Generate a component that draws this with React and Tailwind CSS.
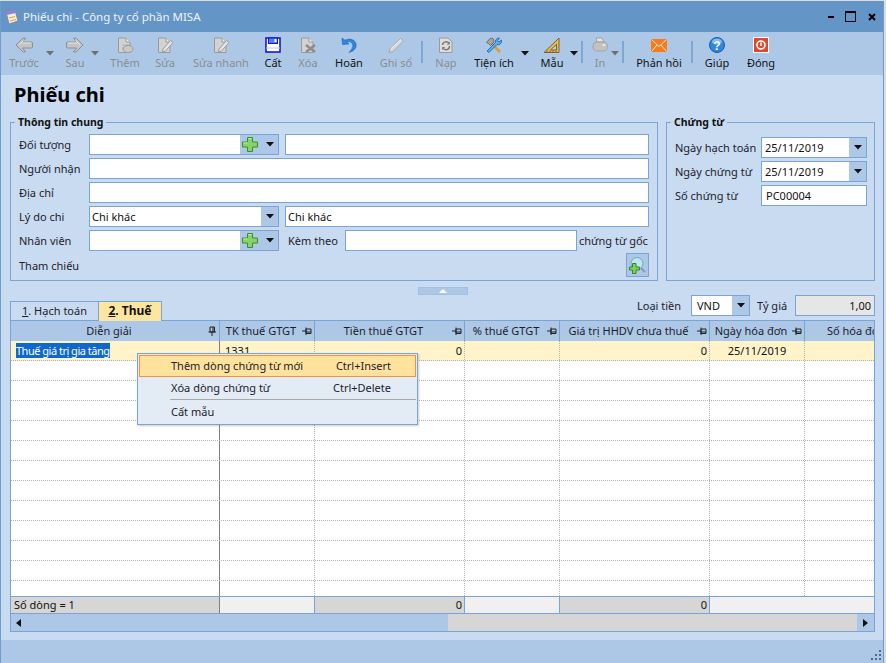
const Caret = ({ color = "#111", className = "" }) => (
  <svg width="8" height="5" viewBox="0 0 8 5" className={className}>
    <path d="M0 0H8L4 4.5Z" fill={color} />
  </svg>
);

const ArrowIcon = ({ flip }) => (
  <svg width="18" height="16" viewBox="0 0 18 16" className={flip ? "-scale-x-100" : ""}>
    <path d="M1 8L8 1H10.5L7.5 5H16.5Q17.5 5 17.5 6V10Q17.5 11 16.5 11H7.5L10.5 15H8Z" fill="#c4c4c4" stroke="#8f8f8f" />
    <path d="M4 8L8.5 3.5M7.5 6H16" stroke="#e6e6e6" fill="none" />
  </svg>
);

const Doc = ({ children }) => (
  <svg width="18" height="17" viewBox="0 0 18 17">
    <path d="M2.5 1H10L14 5V15.5H2.5Z" fill="#d2d2d2" stroke="#9a9a9a" />
    <path d="M10 1V5H14" fill="#eeeeee" stroke="#9a9a9a" />
    {children}
  </svg>
);

const AddDocIcon = () => (
  <Doc>
    <path d="M6 8H13M6 11H10" stroke="#b5b5b5" />
    <ellipse cx="12" cy="12" rx="5" ry="3.6" fill="#c8c8c8" stroke="#9a9a9a" />
  </Doc>
);

const EditDocIcon = () => (
  <Doc>
    <path d="M7 12L14.5 3.5L17 5.5L9.5 14L6.5 15Z" fill="#e4e4e4" stroke="#9c9c9c" />
  </Doc>
);

const DeleteDocIcon = () => (
  <Doc>
    <path d="M7 8L16 15M16 8L7 15" stroke="#8c8c8c" strokeWidth="2.4" />
  </Doc>
);

const RefreshDocIcon = () => (
  <svg width="18" height="17" viewBox="0 0 18 17">
    <path d="M2.5 1H11L15 5V15.5H2.5Z" fill="#dddddd" stroke="#9a9a9a" />
    <path d="M5.5 8A3.5 3.5 0 0 1 12 6.5M12.5 9A3.5 3.5 0 0 1 6 11" fill="none" stroke="#777" strokeWidth="1.4" />
    <path d="M12.8 4.5V7.5H9.8Z M5.2 13V10H8.2Z" fill="#777" />
  </svg>
);

const SaveIcon = () => (
  <svg width="16" height="16" viewBox="0 0 16 16">
    <rect x="1" y="1" width="14" height="14" fill="#ffffff" stroke="#1616d8" strokeWidth="1.6" />
    <rect x="3.5" y="1" width="9" height="5.5" fill="#4f7fe8" stroke="#1616d8" />
    <rect x="9.5" y="2" width="2" height="3" fill="#ffffff" />
    <path d="M1 11H15" stroke="#b8c8f0" />
  </svg>
);

const UndoIcon = () => (
  <svg width="16" height="17" viewBox="0 0 16 17">
    <path d="M1 1L1.5 7.5L8 7L5.8 5Q9 3.8 11 6Q12.8 8.5 11 11.5Q9.8 13.5 8 15.5Q13 14.5 14.8 10.5Q16.2 6.5 13 3.5Q9.2 0.6 4 3.2Z" fill="#2f86dc" stroke="#1f63b4" strokeWidth="0.6" />
  </svg>
);

const PencilIcon = () => (
  <svg width="18" height="17" viewBox="0 0 18 17">
    <path d="M2 15.5L3 11.5L13.5 1.5L16.5 4L6 14.5Z" fill="#d8d8d8" stroke="#a8a8a8" />
    <path d="M4 11.5L14 2.5" stroke="#f0f0f0" />
  </svg>
);

const ToolsIcon = () => (
  <svg width="18" height="17" viewBox="0 0 18 17">
    <path d="M4 4L15 15" stroke="#d6a035" strokeWidth="2.6" />
    <path d="M1.5 5.5L5 1.5Q7.5 0.5 8.5 2L9 5L5.5 8.5L3.5 6.5Z" fill="#a4a4a4" stroke="#6e6e6e" />
    <path d="M2 14L10.5 5.5Q10 2.5 12.5 1.2L14.5 1L12.5 3.5L14 5L16.5 3Q17 6 15 7.2Q13.5 8 12 7.5L4 15.5Z" fill="#55aef0" stroke="#2a6fb8" />
  </svg>
);

const SquareIcon = () => (
  <svg width="18" height="17" viewBox="0 0 18 17">
    <path d="M1 15.5L16 1V15.5Z" fill="#e8bb52" stroke="#80632a" />
    <path d="M7.5 13L13.5 7.2V13Z" fill="#b8cce8" stroke="#80632a" />
    <path d="M4 15V13.5M7 15V13.5M10 15V13.5M13 15V13.5" stroke="#80632a" />
  </svg>
);

const PrinterIcon = () => (
  <svg width="18" height="17" viewBox="0 0 18 17">
    <path d="M5 1H11L13 5H6Z" fill="#e4e4e4" stroke="#a0a0a0" />
    <path d="M2 9Q2 5 6 5H12Q16.5 5 16.5 9.5Q16.5 14 12 14H6Q2 14 2 9Z" fill="#c2c2c2" stroke="#a4a4a4" />
    <ellipse cx="13" cy="8" rx="1.6" ry="1" fill="#eeeeee" />
  </svg>
);

const MailIcon = () => (
  <svg width="16" height="13" viewBox="0 0 16 13">
    <rect width="16" height="13" fill="#f47b20" />
    <path d="M0.5 0.5L8 7.5L15.5 0.5M0.5 12.5L6 6M15.5 12.5L10 6" fill="none" stroke="#ffe2c4" />
  </svg>
);

const HelpIcon = () => (
  <svg width="16" height="16" viewBox="0 0 16 16">
    <circle cx="8" cy="8" r="7.5" fill="#2f87de" stroke="#1a5aa8" />
    <ellipse cx="8" cy="4.5" rx="5" ry="3" fill="#7cbcf2" />
    <text x="8" y="12.5" textAnchor="middle" fontSize="12" fontWeight="700" fill="#fff" fontFamily="Liberation Sans, sans-serif">?</text>
  </svg>
);

const PowerIcon = () => (
  <svg width="16" height="16" viewBox="0 0 16 16">
    <rect x="0.5" y="0.5" width="15" height="15" fill="#e0482c" stroke="#ffffff" />
    <circle cx="8" cy="8" r="4" fill="none" stroke="#fff" strokeWidth="1.6" />
    <path d="M8 5.5V9" stroke="#fff" strokeWidth="1.6" />
  </svg>
);

const PlusIcon = () => (
  <svg width="16" height="15" viewBox="0 0 16 15">
    <path d="M5.5 0.5H10.5V5H15.5V10H10.5V14.5H5.5V10H0.5V5H5.5Z" fill="#85d468" stroke="#3b8f2a" />
    <path d="M6.5 1.5H9.5M1.5 6H5.5" stroke="#c4f0b0" />
  </svg>
);

const SearchAddIcon = () => (
  <svg width="17" height="17" viewBox="0 0 17 17">
    <circle cx="8" cy="6.5" r="6" fill="#bfe4f2" stroke="#6aa4c4" />
    <path d="M12 11L16 15" stroke="#9a8cd0" strokeWidth="2.2" />
    <path d="M3.5 6.5H7V10H10.5V13H7V16.5H3.5V13H0.5V10H3.5Z" fill="#7fd060" stroke="#2f8a24" />
  </svg>
);

const PinIcon = ({ vertical }) => (
  <svg width="10" height="10" viewBox="0 0 10 10" className={vertical ? "" : "rotate-90"}>
    <path d="M3 1H7.5V6H3ZM1.5 6H9M5 6V10M6 1V6" fill="none" stroke="#222" />
  </svg>
);

const Tool = ({ label, children, disabled, className }) => (
  <div className={`flex shrink-0 flex-col items-center ${className}`}>
    <div className="mt-[3px] flex h-[20px] items-center justify-center">{children}</div>
    <span className={`h-[16px] whitespace-nowrap text-[11px] leading-[16px] ${disabled ? "text-[#8c8c8c]" : "text-[#111]"}`}>
      {label}
    </span>
  </div>
);

const ToolCaret = ({ disabled, className }) => (
  <div className={`mt-[19px] flex w-[8px] shrink-0 ${className}`}>
    <Caret color={disabled ? "#707070" : "#111"} />
  </div>
);

const ToolSep = ({ className }) => (
  <div className={`mt-[9px] h-[22px] w-[2px] shrink-0 bg-[#7ea6d6] ${className}`} />
);

const Toolbar = () => (
  <div className="flex h-[43px] shrink-0 bg-[#adc8e6] pl-[1px]">
    <Tool disabled label="Trước" className="w-[44px]"><ArrowIcon /></Tool>
    <ToolCaret disabled />
    <Tool disabled label="Sau" className="ml-[2px] w-[38px]"><ArrowIcon flip /></Tool>
    <ToolCaret disabled className="-ml-[3px]" />
    <Tool disabled label="Thêm" className="ml-[8px] w-[36px]"><AddDocIcon /></Tool>
    <Tool disabled label="Sửa" className="ml-[6px] w-[32px]"><EditDocIcon /></Tool>
    <Tool disabled label="Sửa nhanh" className="ml-[10px] w-[60px]"><EditDocIcon /></Tool>
    <Tool label="Cất" className="ml-[7px] w-[30px]"><SaveIcon /></Tool>
    <Tool disabled label="Xóa" className="ml-[4px] w-[32px]"><DeleteDocIcon /></Tool>
    <Tool label="Hoãn" className="ml-[5px] w-[40px]"><UndoIcon /></Tool>
    <Tool disabled label="Ghi sổ" className="ml-[7px] w-[40px]"><PencilIcon /></Tool>
    <ToolSep className="ml-[5px]" />
    <Tool disabled label="Nạp" className="ml-[7px] w-[32px]"><RefreshDocIcon /></Tool>
    <Tool label="Tiện ích" className="ml-[8px] w-[48px]"><ToolsIcon /></Tool>
    <ToolCaret className="ml-[3px]" />
    <Tool label="Mẫu" className="ml-[7px] w-[32px]"><SquareIcon /></Tool>
    <ToolCaret className="ml-[2px]" />
    <ToolSep className="ml-[3px]" />
    <Tool disabled label="In" className="ml-[7px] w-[20px]"><PrinterIcon /></Tool>
    <ToolCaret disabled className="ml-[1px]" />
    <ToolSep className="ml-[3px]" />
    <Tool label="Phản hồi" className="ml-[10px] w-[50px]"><MailIcon /></Tool>
    <ToolSep className="ml-[7px]" />
    <Tool label="Giúp" className="ml-[9px] w-[30px]"><HelpIcon /></Tool>
    <Tool label="Đóng" className="ml-[13px] w-[32px]"><PowerIcon /></Tool>
  </div>
);

const Field = ({ children, className = "", value, valueClass = "pl-[2px]" }) => (
  <div className={`flex h-[21px] items-stretch border border-[#7ba3d4] bg-white ${className}`}>
    <span className={`flex-1 truncate text-[11px] leading-[19px] text-[#111] ${valueClass}`}>{value}</span>
    {children}
  </div>
);

const DropButton = () => (
  <div className="flex w-[17px] items-center justify-center bg-[#adc8e6]">
    <Caret />
  </div>
);

const AddDrop = () => (
  <div className="flex w-[38px] items-center bg-[#adc8e6] pl-[2px]">
    <PlusIcon />
    <Caret className="ml-[8px]" />
  </div>
);

const Label = ({ children, className = "w-[70px]" }) => (
  <span className={`shrink-0 whitespace-nowrap text-[11px] leading-[21px] text-[#1c1c2c] ${className}`}>{children}</span>
);

const Group = ({ title, className, children }) => (
  <fieldset className={`h-[166px] min-w-0 shrink-0 border border-[#7ba3d4] ${className}`}>
    <legend className="ml-[4px] px-[3px] text-[10.5px] font-bold leading-[14px] text-[#111]">{title}</legend>
    {children}
  </fieldset>
);

const colWidths = ["w-[209px]", "w-[95px]", "w-[150px]", "w-[95px]", "w-[150px]", "w-[95px]", "flex-1"];

const headers = ["Diễn giải", "TK thuế GTGT", "Tiền thuế GTGT", "% thuế GTGT", "Giá trị HHDV chưa thuế", "Ngày hóa đơn"];

const GridHeader = () => (
  <div className="flex h-[20px] shrink-0 bg-[#adc8e6] text-[11px] leading-[20px] text-[#1c1c2c]">
    {headers.map((h, i) => (
      <div key={h} className={`flex items-center border-r border-[#7ba3d4] pr-[2px] ${colWidths[i]}`}>
        <span className="flex-1 whitespace-nowrap text-center">{h}</span>
        <PinIcon vertical={i === 0} />
      </div>
    ))}
    <div className="flex-1 overflow-hidden whitespace-nowrap pl-[22px]">Số hóa đơn</div>
  </div>
);

const GridRow = ({ first, cells = [] }) => (
  <div className={`flex h-[20px] shrink-0 border-b border-dotted border-[#b0b0b0] text-[11px] leading-[19px] text-[#111] ${first ? "bg-[#fff3c9]" : "bg-white"}`}>
    {colWidths.map((w, i) => (
      <div
        key={w + i}
        className={`${w} ${i === 0 ? "border-r border-[#808080]" : i < 6 ? "border-r border-dotted border-[#b0b0b0]" : ""} ${cells[i]?.className ?? ""}`}
      >
        {cells[i]?.node}
      </div>
    ))}
  </div>
);

const firstRow = [
  { className: "pl-[5px]", node: <span className="inline-block h-[15px] bg-[#0f68cc] pr-px leading-[15px] tracking-[-0.5px] text-white">Thuế giá trị gia tăng</span> },
  { className: "pl-[5px]", node: "1331" },
  { className: "pr-[2px] text-right", node: "0" },
  {},
  { className: "pr-[2px] text-right", node: "0" },
  { className: "text-center", node: "25/11/2019" },
];

const emptyRows = Array.from({ length: 12 }, (_, i) => i);

const footerCells = [
  { bg: "bg-[#d6d6d6]", w: colWidths[0], text: "Số dòng = 1", align: "pl-[3px]" },
  { bg: "bg-[#f0f0f0]", w: colWidths[1] },
  { bg: "bg-[#d6d6d6]", w: colWidths[2], text: "0", align: "pr-[2px] text-right" },
  { bg: "bg-[#f0f0f0]", w: colWidths[3] },
  { bg: "bg-[#d6d6d6]", w: colWidths[4], text: "0", align: "pr-[2px] text-right" },
  { bg: "bg-[#f0f0f0]", w: "flex-1", last: true },
];

const ContextMenu = () => (
  <div className="absolute left-[126px] top-[32px] w-[281px] border border-[#7ba3d4] bg-[#e3ebf5] p-px text-[11px] leading-[20px] text-[#1c1c2c] shadow-[1px_1px_2px_rgba(0,0,0,0.2)]">
    <div className="flex h-[22px] items-center border border-[#f0933c] bg-[#ffe39c]">
      <span className="ml-[31px] flex-1">Thêm dòng chứng từ mới</span>
      <span className="mr-[24px]">Ctrl+Insert</span>
    </div>
    <div className="flex h-[21px] items-center">
      <span className="ml-[32px] flex-1">Xóa dòng chứng từ</span>
      <span className="mr-[25px]">Ctrl+Delete</span>
    </div>
    <div className="ml-[31px] mt-px h-px bg-[#a8a8a8]" />
    <div className="flex h-[23px] items-center">
      <span className="ml-[32px]">Cất mẫu</span>
    </div>
  </div>
);

export default function App() {
  return (
    <div className="h-[663px] w-[886px] overflow-hidden bg-[#dcdcdc] pr-[2px] pt-px font-['Noto_Sans',sans-serif]">
      <div className="flex h-[662px] flex-col border-x border-[#6f9bd0] bg-[#c9dbf1]">
        <div className="flex h-[31px] shrink-0 items-center bg-[#6395c6] pl-[3px] pr-[7px]">
          <svg width="16" height="16" viewBox="0 0 16 16">
            <path d="M2 3L11 1L14 12L5 15Z" fill="#f4f0d8" stroke="#8a80b8" />
            <path d="M2 3L11 1L11.8 4L3 6Z" fill="#8f84d0" />
            <path d="M5 9L11 7.5M6 12L12 10.5" stroke="#e0a040" />
          </svg>
          <span className="ml-[3px] flex-1 text-[11.5px] text-[#eef4fb]">Phiếu chi - Công ty cổ phần MISA</span>
          <div className="h-[2px] w-[6px] bg-black" />
          <div className="ml-[11px] h-[11px] w-[11px] border border-t-2 border-black" />
          <svg width="8" height="8" viewBox="0 0 8 8" className="ml-[12px]">
            <path d="M1 1L7 7M7 1L1 7" stroke="#000" strokeWidth="2" />
          </svg>
        </div>
        <Toolbar />
        <div className="flex min-h-0 flex-1 flex-col pl-[9px] pr-[8px]">
          <h1 className="-ml-[1px] h-[40px] pl-[5px] pt-[6px] text-[20px] font-bold leading-[28px] text-black">Phiếu chi</h1>
          <div className="flex justify-between">
            <Group title="Thông tin chung" className="w-[648px]">
              <div className="flex flex-col gap-[3px] pl-[8px] pr-[8px] pt-[5px]">
                <div className="flex">
                  <Label>Đối tượng</Label>
                  <Field className="w-[190px]"><AddDrop /></Field>
                  <Field className="ml-[6px] flex-1" />
                </div>
                <div className="flex">
                  <Label>Người nhận</Label>
                  <Field className="flex-1" />
                </div>
                <div className="flex">
                  <Label>Địa chỉ</Label>
                  <Field className="flex-1" />
                </div>
                <div className="flex">
                  <Label>Lý do chi</Label>
                  <Field className="w-[190px]" value="Chi khác"><DropButton /></Field>
                  <Field className="ml-[6px] flex-1" value="Chi khác" />
                </div>
                <div className="flex">
                  <Label>Nhân viên</Label>
                  <Field className="w-[190px]"><AddDrop /></Field>
                  <Label className="ml-[9px] w-[57px]">Kèm theo</Label>
                  <Field className="w-[232px]" />
                  <Label className="ml-[2px]">chứng từ gốc</Label>
                </div>
                <div className="-mt-[1px] flex h-[24px] items-center justify-between">
                  <Label>Tham chiếu</Label>
                  <div className="flex h-[24px] w-[23px] items-center justify-center border border-[#7ba3d4] bg-[#adc8e6]">
                    <SearchAddIcon />
                  </div>
                </div>
              </div>
            </Group>
            <Group title="Chứng từ" className="w-[209px]">
              <div className="flex flex-col gap-[3px] pl-[8px] pr-[7px] pt-[8px]">
                <div className="flex">
                  <Label className="w-[86px]">Ngày hạch toán</Label>
                  <Field className="flex-1" value="25/11/2019" valueClass="pl-[3px]"><DropButton /></Field>
                </div>
                <div className="flex">
                  <Label className="w-[86px]">Ngày chứng từ</Label>
                  <Field className="flex-1" value="25/11/2019" valueClass="pl-[3px]"><DropButton /></Field>
                </div>
                <div className="flex">
                  <Label className="w-[86px]">Số chứng từ</Label>
                  <Field className="flex-1" value="PC00004" valueClass="pl-[4px]" />
                </div>
              </div>
            </Group>
          </div>
          <div className="mt-[6px] flex h-[8px] w-[50px] shrink-0 items-center justify-center self-center border border-[#a3c0e2] bg-[#adc8e6]">
            <svg width="8" height="4" viewBox="0 0 8 4"><path d="M0 4H8L4 0Z" fill="#fff" /></svg>
          </div>
          <div className="flex h-[25px] shrink-0 items-start justify-between">
            <div className="mt-[6px] flex h-[20px] text-[11px] leading-[18px]">
              <div className="flex w-[89px] justify-center border border-[#7ba3d4] bg-[#c9dbf1] text-[#1c1c2c]">
                <span><span className="underline">1</span>. Hạch toán</span>
              </div>
              <div className="z-10 -ml-px flex w-[64px] justify-center border border-b-0 border-[#7ba3d4] bg-[#ffe6a0] text-[12px] font-bold text-[#111]">
                <span><span className="underline">2</span>. Thuế</span>
              </div>
            </div>
            <div className="flex items-center">
              <Label className="w-[54px]">Loại tiền</Label>
              <Field className="w-[59px]" value="VND" valueClass="pl-[5px]"><DropButton /></Field>
              <Label className="ml-[7px] w-[38px]">Tỷ giá</Label>
              <div className="h-[21px] w-[80px] border border-[#7ba3d4] bg-[#e6e6e6] pr-[3px] text-right text-[11px] leading-[19px] text-[#111]">1,00</div>
            </div>
          </div>
          <div className="relative flex h-[312px] shrink-0 flex-col border border-[#7ba3d4]">
            <GridHeader />
            <div className="flex min-h-0 flex-1 flex-col overflow-hidden bg-white">
              <GridRow first cells={firstRow} />
              {emptyRows.map((r) => <GridRow key={r} />)}
            </div>
            <div className="flex h-[18px] shrink-0 border-y border-[#7ba3d4] text-[11px] leading-[16px] text-[#111]">
              {footerCells.map((c, i) => (
                <div key={i} className={`${c.w} ${c.bg} ${c.align ?? ""} ${c.last ? "" : "border-r border-[#7ba3d4]"} ${i === 0 ? "border-[#808080]" : ""}`}>{c.text}</div>
              ))}
            </div>
            <div className="flex h-[17px] shrink-0 bg-[#d6d6d6]">
              <div className="flex w-[437px] items-center bg-[#adc8e6] pl-[5px]">
                <svg width="5" height="8" viewBox="0 0 5 8"><path d="M5 0V8L0 4Z" fill="#111" /></svg>
              </div>
              <div className="flex-1" />
              <div className="flex w-[17px] items-center justify-center bg-[#adc8e6]">
                <svg width="5" height="8" viewBox="0 0 5 8"><path d="M0 0V8L5 4Z" fill="#111" /></svg>
              </div>
            </div>
            <ContextMenu />
          </div>
        </div>
        <div className="flex h-[23px] shrink-0 items-end justify-end bg-[#adc8e6] pb-[2px] pr-[1px]">
          <svg width="11" height="11" viewBox="0 0 11 11" fill="#4a6a90">
            <rect x="8" y="0" width="2" height="2" />
            <rect x="4" y="4" width="2" height="2" />
            <rect x="8" y="4" width="2" height="2" />
            <rect x="0" y="8" width="2" height="2" />
            <rect x="4" y="8" width="2" height="2" />
            <rect x="8" y="8" width="2" height="2" />
          </svg>
        </div>
      </div>
    </div>
  );
}
